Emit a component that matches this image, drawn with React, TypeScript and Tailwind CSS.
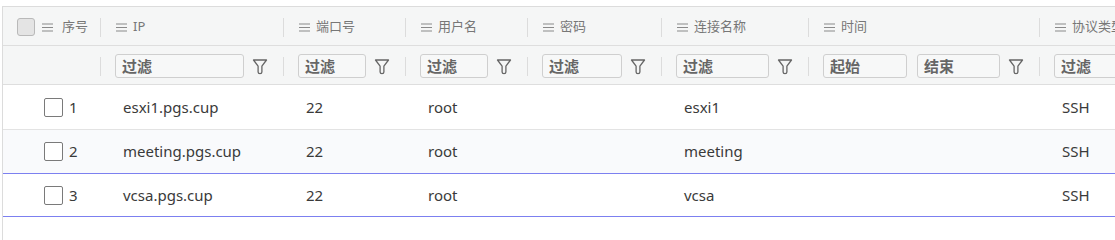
import React from "react";

type Col = { key: string; title: string; width: string; filter: "text" | "range" | "none" };

const COLS: Col[] = [
  { key: "ip", title: "IP", width: "w-[182px]", filter: "text" },
  { key: "port", title: "端口号", width: "w-[121px]", filter: "text" },
  { key: "user", title: "用户名", width: "w-[121px]", filter: "text" },
  { key: "pwd", title: "密码", width: "w-[133px]", filter: "text" },
  { key: "name", title: "连接名称", width: "w-[146px]", filter: "text" },
  { key: "time", title: "时间", width: "w-[230px]", filter: "range" },
  { key: "proto", title: "协议类型", width: "w-[160px]", filter: "text" },
];

const ROWS = [
  { id: 1, ip: "esxi1.pgs.cup", port: "22", user: "root", pwd: "", name: "esxi1", time: "", proto: "SSH" },
  { id: 2, ip: "meeting.pgs.cup", port: "22", user: "root", pwd: "", name: "meeting", time: "", proto: "SSH" },
  { id: 3, ip: "vcsa.pgs.cup", port: "22", user: "root", pwd: "", name: "vcsa", time: "", proto: "SSH" },
];

const cjk = "font-['Noto_Sans','Noto_Sans_CJK_SC',sans-serif]";

function MenuIcon() {
  return (
    <svg width="11" height="9" viewBox="0 0 11 9" className="shrink-0">
      <path d="M0 1h11M0 4.5h11M0 8h11" stroke="#8a8a8a" strokeWidth="1.2" />
    </svg>
  );
}

function FunnelIcon() {
  return (
    <svg width="16" height="17" viewBox="0 0 16 17" className="shrink-0">
      <path
        d="M1.5 2h13l-4.6 6.2v5.9q0 1.6-1.9 1.6t-1.9-1.6V8.2z"
        fill="none"
        stroke="#666"
        strokeWidth="1.3"
        strokeLinejoin="round"
      />
    </svg>
  );
}

function Divider() {
  return <div className="w-px h-[19px] bg-[#dcdcdc] shrink-0" />;
}

function FilterBox({ label, className = "" }: { label: string; className?: string }) {
  return (
    <div
      className={`h-[24px] border border-[#cfcfcf] rounded-[3px] bg-[#f7f8f8] flex items-center pl-[6px] text-[15px] font-semibold text-[#666] ${className}`}
    >
      {label}
    </div>
  );
}

export default function App() {
  return (
    <div className={`w-[1115px] h-[240px] bg-white overflow-hidden pt-[6px] pl-[2px] ${cjk}`}>
      <div className="w-[1300px] h-[234px] border-l border-t border-[#dcdcdc]">
        {/* header titles */}
        <div className="flex items-center h-[39px] pt-[2px] bg-[#f5f6f6] border-b border-[#dedede]">
          <div className="w-[97px] flex items-center pl-[14px] gap-[7px]">
            <div className="w-[18px] h-[18px] rounded-[3px] border border-[#b9b9b9] bg-[#e4e4e4]" />
            <MenuIcon />
            <span className="text-[13px] text-[#777] ml-[2px]">序号</span>
          </div>
          {COLS.map((c) => (
            <React.Fragment key={c.key}>
              <Divider />
              <div className={`${c.width} flex items-center gap-[6px] pl-[15px] shrink-0`}>
                <MenuIcon />
                <span className="text-[13px] text-[#777] whitespace-nowrap">{c.title}</span>
              </div>
            </React.Fragment>
          ))}
        </div>

        {/* header filters */}
        <div className="flex items-center h-[39px] pt-[2px] bg-[#f5f6f6] border-b border-[#dedede]">
          <div className="w-[97px]" />
          {COLS.map((c) => (
            <React.Fragment key={c.key}>
              <Divider />
              <div className={`${c.width} flex items-center gap-[8px] pl-[14px] pr-[15px] shrink-0`}>
                {c.filter === "range" ? (
                  <>
                    <FilterBox label="起始" className="w-[85px]" />
                    <FilterBox label="结束" className="w-[84px] ml-[2px]" />
                  </>
                ) : (
                  <FilterBox label="过滤" className="flex-1" />
                )}
                {c.key !== "proto" && <FunnelIcon />}
              </div>
            </React.Fragment>
          ))}
        </div>

        {/* rows */}
        <div className="font-['Noto_Sans','Open_Sans',sans-serif] text-[15px] text-[#3a3a3a]">
          {ROWS.map((r, i) => (
            <div
              key={r.id}
              className={`flex items-center ${
                i === 0
                  ? "h-[45px] border-b border-[#e3e3e3]"
                  : i === 1
                  ? "h-[44px] border-b border-[#7c80f0]"
                  : "h-[43px] border-b border-[#7c80f0]"
              } ${i === 1 ? "bg-[#f9fafc]" : "bg-white"}`}
            >
              <div className="w-[97px] flex items-center pl-[41px] gap-[6px]">
                <div className="w-[19px] h-[19px] rounded-[2px] border-[1.5px] border-[#7a7a7a] bg-white" />
                <span>{r.id}</span>
              </div>
              {COLS.map((c) => (
                <div key={c.key} className={`${c.width} ml-px pl-[22px] shrink-0 whitespace-nowrap`}>
                  {(r as Record<string, string | number>)[c.key]}
                </div>
              ))}
            </div>
          ))}
        </div>
      </div>
    </div>
  );
}
